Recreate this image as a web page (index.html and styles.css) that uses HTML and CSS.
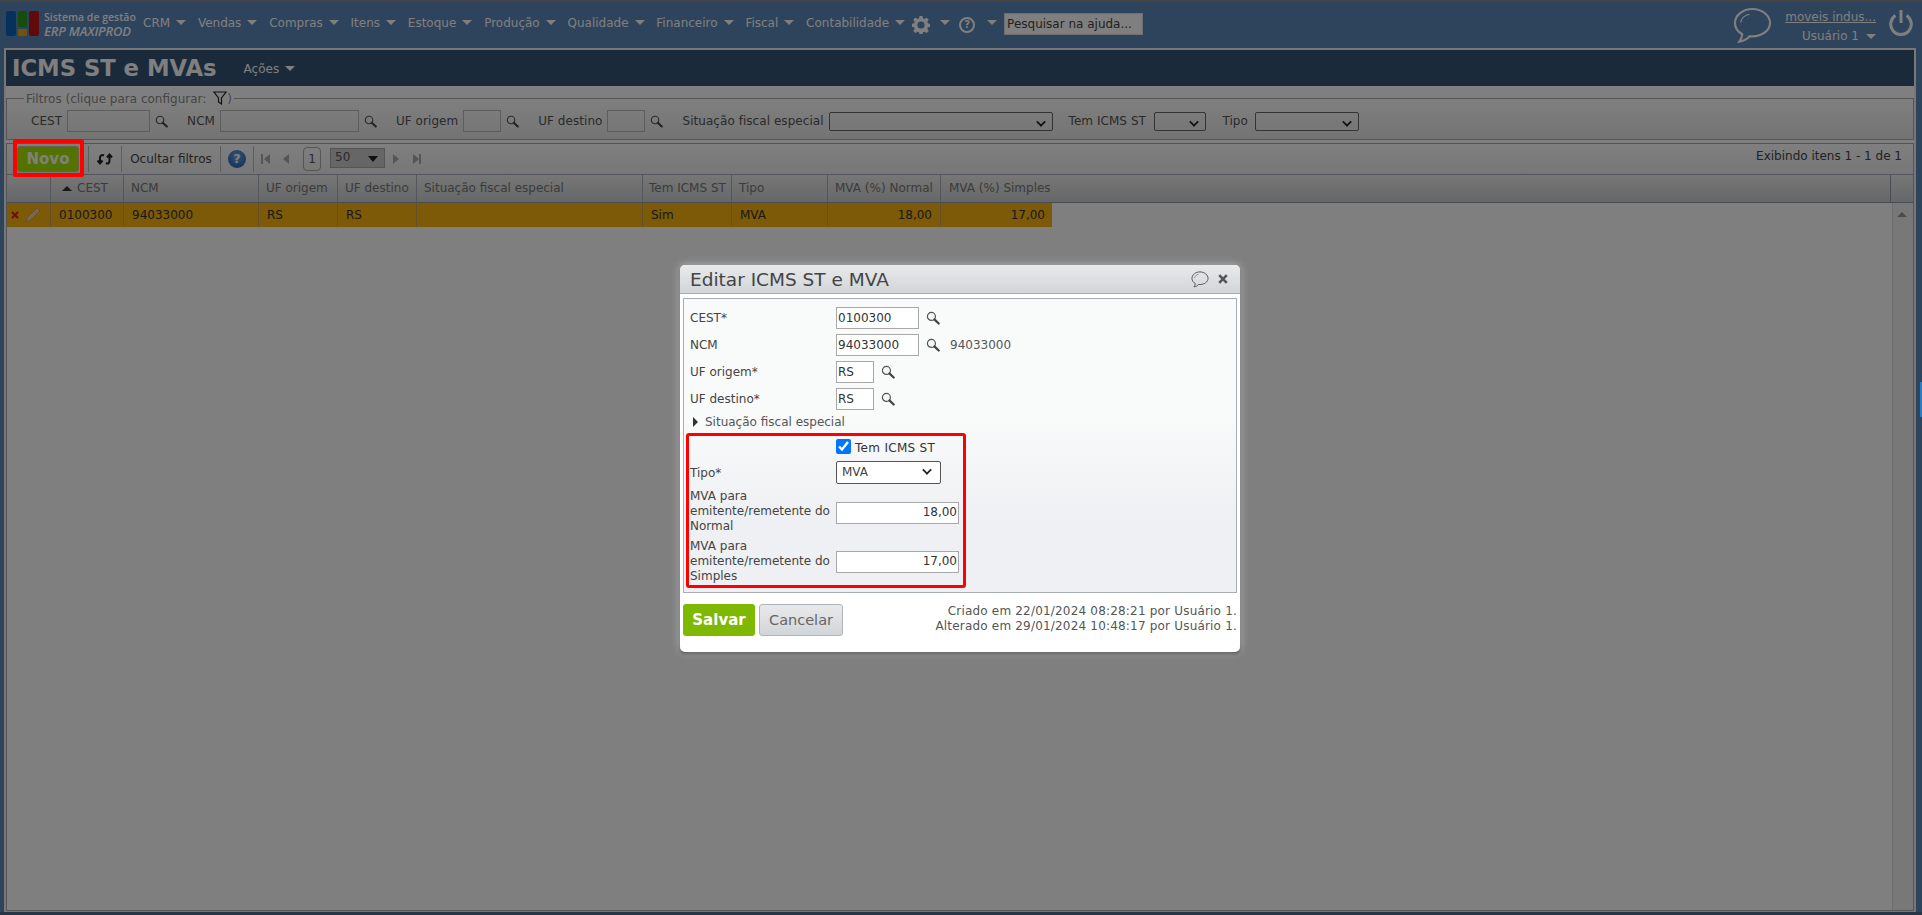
FILE: index.html
```html
<!DOCTYPE html>
<html lang="pt-BR">
<head>
<meta charset="utf-8">
<title>ICMS ST e MVAs</title>
<link rel="stylesheet" href="styles.css">
</head>
<body>
<svg class="defs" width="0" height="0" aria-hidden="true">
  <symbol id="lens" viewBox="0 0 15 15">
    <circle cx="5.8" cy="5.8" r="4.3" fill="#f4f6f8" stroke="#555" stroke-width="1.3"/>
    <path d="M9 9l4.6 4.4" stroke="#444" stroke-width="2.4" stroke-linecap="round"/>
  </symbol>
  <symbol id="bubble" viewBox="0 0 40 38">
    <path d="M20 2C10 2 2 8.500 2 16.500c0 5 3 9 7.500 11.500 0 3-1.500 5.500-3 7.500 4-.5 8-2.500 10.500-5.500 1 .1 2 .2 3 .2 10 0 18-6.200 18-13.700S30 2 20 2z" fill="none" stroke="currentColor" stroke-width="2.200"/>
    <path d="M8 16c0-4 4-8 9-8.500" fill="none" stroke="currentColor" stroke-width="1.200"/>
  </symbol>
</svg>
<div class="app">
  <header class="topbar">
    <div class="logo">
      <svg class="logo-mark" viewBox="0 0 33 25" aria-hidden="true">
        <rect x="0" y="0" width="10" height="25" rx="2" fill="#0a62b8"/>
        <rect x="12" y="0" width="9" height="16" rx="2" fill="#2f9a18"/>
        <rect x="12" y="18" width="9" height="7" rx="1" fill="#e2a41c"/>
        <rect x="23" y="0" width="10" height="25" rx="2" fill="#c0141c"/>
      </svg>
      <div class="logo-text">
        <span class="logo-small">Sistema de gestão</span>
        <span class="logo-big">ERP MAXIPROD</span>
      </div>
    </div>
    <nav class="menu">
      <span class="menu-item">CRM<i class="caret"></i></span>
      <span class="menu-item">Vendas<i class="caret"></i></span>
      <span class="menu-item">Compras<i class="caret"></i></span>
      <span class="menu-item">Itens<i class="caret"></i></span>
      <span class="menu-item">Estoque<i class="caret"></i></span>
      <span class="menu-item">Produção<i class="caret"></i></span>
      <span class="menu-item">Qualidade<i class="caret"></i></span>
      <span class="menu-item">Financeiro<i class="caret"></i></span>
      <span class="menu-item">Fiscal<i class="caret"></i></span>
      <span class="menu-item">Contabilidade<i class="caret"></i></span>
    </nav>
    <svg class="gear" viewBox="0 0 20 20" aria-hidden="true">
      <path fill="#fff" fill-rule="evenodd" d="M8.300 0h3.400l.5 2.700 1.700.7 2.300-1.600 2.400 2.400-1.600 2.300.7 1.700 2.700.5v3.400l-2.700.5-.7 1.700 1.600 2.300-2.400 2.400-2.300-1.600-1.700.7-.5 2.700H8.300l-.5-2.700-1.700-.7-2.300 1.600-2.400-2.400 1.600-2.300-.7-1.700L-.4 12V8.600l2.700-.5.7-1.700-1.600-2.300 2.400-2.400 2.300 1.600 1.700-.7zM10 6a4 4 0 100 8 4 4 0 000-8z"/>
    </svg>
    <i class="caret caret-gear"></i>
    <span class="help-round">?</span>
    <i class="caret caret-help"></i>
    <span class="help-search">Pesquisar na ajuda...</span>
    <svg class="chat" viewBox="0 0 40 38" aria-hidden="true"><use href="#bubble"/></svg>
    <div class="account">
      <a class="company">moveis indus...</a>
      <span class="user">Usuário 1<i class="caret"></i></span>
    </div>
    <svg class="power" viewBox="0 0 24 26" aria-hidden="true">
      <path d="M6.500 5.500a10.300 10.300 0 1011 0" fill="none" stroke="#fff" stroke-width="3"/>
      <path d="M12 0v13" stroke="#fff" stroke-width="3"/>
    </svg>
  </header>

  <main class="frame">
    <div class="titlebar">
      <h1 class="page-title">ICMS ST e MVAs</h1>
      <span class="actions">Ações<i class="caret"></i></span>
    </div>

    <fieldset class="filters">
      <legend class="filters-legend">Filtros (clique para configurar:
        <svg class="funnel" viewBox="0 0 14 14" aria-hidden="true"><path d="M1 1h12L8.500 7v6l-3-2V7z" fill="none" stroke="#222" stroke-width="1.200"/></svg>)
      </legend>
      <div class="filter-row">
        <label class="flabel">CEST</label><span class="finput f-cest"></span><svg class="lens"><use href="#lens"/></svg>
        <label class="flabel">NCM</label><span class="finput f-ncm"></span><svg class="lens"><use href="#lens"/></svg>
        <label class="flabel">UF origem</label><span class="finput f-uf"></span><svg class="lens"><use href="#lens"/></svg>
        <label class="flabel">UF destino</label><span class="finput f-uf"></span><svg class="lens"><use href="#lens"/></svg>
        <label class="flabel">Situação fiscal especial</label><span class="fselect s-sit"><i class="chev"></i></span>
        <label class="flabel flabel-next">Tem ICMS ST</label><span class="fselect s-tem"><i class="chev"></i></span>
        <label class="flabel flabel-next">Tipo</label><span class="fselect s-tipo"><i class="chev"></i></span>
      </div>
    </fieldset>

    <section class="grid-panel">
      <div class="toolbar">
        <button class="btn-new">Novo</button>
        <span class="tool tool-refresh">
          <svg class="refresh" viewBox="0 0 16 14" aria-hidden="true">
            <path d="M7 3.500C5 2.500 3 3.500 3 6v5M.5 8.500L3 11.500l2.500-3" fill="none" stroke="#222" stroke-width="2"/>
            <path d="M9 11c2 1 3.500 0 3.500-2.500V3M10 5.500L12.500 2.500 15 5.500" fill="none" stroke="#222" stroke-width="2"/>
          </svg>
        </span>
        <span class="tool tool-text">Ocultar filtros</span>
        <span class="tool tool-help"><span class="help-blue">?</span></span>
        <span class="pager">
          <i class="pg pg-first"></i>
          <i class="pg pg-prev"></i>
          <span class="page-num">1</span>
          <span class="page-size">50<i class="tri-down"></i></span>
          <i class="pg pg-next"></i>
          <i class="pg pg-last"></i>
        </span>
        <span class="showing">Exibindo itens 1 - 1 de 1</span>
      </div>

      <div class="thead">
        <span class="th"></span>
        <span class="th th-sorted"><i class="tri-up"></i>CEST</span>
        <span class="th">NCM</span>
        <span class="th">UF origem</span>
        <span class="th">UF destino</span>
        <span class="th">Situação fiscal especial</span>
        <span class="th th-tight">Tem ICMS ST</span>
        <span class="th">Tipo</span>
        <span class="th">MVA (%) Normal</span>
        <span class="th th-clip">MVA (%) Simples</span>
        <span class="th-fill"></span>
        <span class="th-scroll"></span>
      </div>

      <div class="tbody">
        <div class="rows">
          <div class="tr">
            <span class="td td-icons">
              <svg class="row-x" viewBox="0 0 8 8" aria-hidden="true"><path d="M1 1l6 6M7 1L1 7" stroke="#e0202a" stroke-width="2.200"/></svg>
              <svg class="row-pencil" viewBox="0 0 16 16" aria-hidden="true"><path d="M1 15l1.500-5L12 1l3 3-9.500 9z" fill="#f4d090" stroke="#c8985a" stroke-width=".8"/></svg>
            </span>
            <span class="td">0100300</span>
            <span class="td">94033000</span>
            <span class="td">RS</span>
            <span class="td">RS</span>
            <span class="td"></span>
            <span class="td">Sim</span>
            <span class="td">MVA</span>
            <span class="td td-num">18,00</span>
            <span class="td td-num">17,00</span>
          </div>
        </div>
        <div class="scrollbar"><i class="tri-up tri-scroll"></i></div>
      </div>
    </section>
  </main>
</div>

<div class="overlay"></div>

<div class="mark mark-novo"></div>
<i class="edge-accent"></i>

<div class="dialog">
  <div class="dialog-head">
    <h2 class="dialog-title">Editar ICMS ST e MVA</h2>
    <svg class="dialog-chat" viewBox="0 0 40 38" aria-hidden="true"><use href="#bubble"/></svg>
    <svg class="dialog-close" viewBox="0 0 10 10" aria-hidden="true"><path d="M1.200 1.200l7.600 7.600M8.800 1.200L1.200 8.800" stroke="#555" stroke-width="2.600"/></svg>
  </div>
  <div class="dialog-body">
    <div class="form-box">
      <div class="row row-a">
        <label class="lab">CEST*</label>
        <span class="inp inp-md">0100300</span>
        <svg class="lens lens-d"><use href="#lens"/></svg>
      </div>
      <div class="row row-b">
        <label class="lab">NCM</label>
        <span class="inp inp-md">94033000</span>
        <svg class="lens lens-d"><use href="#lens"/></svg>
        <span class="hint">94033000</span>
      </div>
      <div class="row row-b">
        <label class="lab">UF origem*</label>
        <span class="inp inp-sm">RS</span>
        <svg class="lens lens-d"><use href="#lens"/></svg>
      </div>
      <div class="row row-b">
        <label class="lab">UF destino*</label>
        <span class="inp inp-sm">RS</span>
        <svg class="lens lens-d"><use href="#lens"/></svg>
      </div>
      <div class="collapse"><i class="tri-right"></i>Situação fiscal especial</div>
      <div class="marked">
        <div class="row-check">
          <input class="check" type="checkbox" checked>
          <span class="check-label">Tem ICMS ST</span>
        </div>
        <div class="row row-tipo">
          <label class="lab">Tipo*</label>
          <span class="sel">MVA<i class="chev"></i></span>
        </div>
        <div class="row row-mva">
          <label class="lab lab-multi">MVA para emitente/remetente do Normal</label>
          <span class="inp inp-lg">18,00</span>
        </div>
        <div class="row row-mva row-mva2">
          <label class="lab lab-multi">MVA para emitente/remetente do Simples</label>
          <span class="inp inp-lg">17,00</span>
        </div>
      </div>
    </div>
    <div class="dialog-foot">
      <button class="btn-save">Salvar</button>
      <button class="btn-cancel">Cancelar</button>
      <div class="audit">
        <div>Criado em 22/01/2024 08:28:21 por Usuário 1.</div>
        <div>Alterado em 29/01/2024 10:48:17 por Usuário 1.</div>
      </div>
    </div>
  </div>
</div>
</body>
</html>
```
FILE: styles.css
```css
* { box-sizing: border-box; }
html, body { margin: 0; padding: 0; height: 915px; overflow: hidden; }
body { font-family: "DejaVu Sans", Verdana, sans-serif; font-size: 12px; color: #444; background: #5c86b8; position: relative; }
.defs { position: absolute; }
i { display: block; font-style: normal; }

.app { height: 915px; display: flex; flex-direction: column; border-top: 2px solid #888; border-bottom: 3px solid #4e6a8c; padding-right: 6px; background: #5c86b8; }

/* top bar */
.topbar { height: 46px; flex: none; display: flex; align-items: flex-start; color: #fff; position: relative; }
.logo { display: flex; margin: 9px 0 0 6px; width: 137px; flex: none; }
.logo-mark { width: 33px; height: 25px; flex: none; }
.logo-text { margin-left: 5px; display: flex; flex-direction: column; color: #fff; font-family: "Open Sans", sans-serif; font-weight: 600; white-space: nowrap; }
.logo-small { font-size: 10.500px; line-height: 13px; }
.logo-big { font-size: 13px; font-style: italic; line-height: 14px; letter-spacing: -.2px; }
.menu { display: flex; margin-top: 14px; gap: 11.800px; flex: none; }
.menu-item { display: flex; align-items: flex-start; white-space: nowrap; line-height: 15px; }
.caret { width: 0; height: 0; border-left: 5px solid transparent; border-right: 5px solid transparent; border-top: 5px solid #fff; margin: 4px 0 0 6px; flex: none; }
.gear { width: 18px; height: 18px; margin: 14px 0 0 7px; flex: none; }
.caret-gear { margin: 18px 0 0 10px; }
.help-round { width: 16px; height: 16px; margin: 15px 0 0 9px; border: 2px solid #fff; border-radius: 50%; font-size: 10px; line-height: 12px; text-align: center; font-weight: 700; flex: none; }
.caret-help { margin: 18px 0 0 12px; }
.help-search { width: 139px; height: 22px; margin: 11px 0 0 7px; background: #fff; border: 1px solid #ddd; color: #444; line-height: 20px; padding-left: 2px; white-space: nowrap; flex: none; }
.chat { width: 39px; height: 37px; margin: 5px 0 0 auto; color: #fff; flex: none; }
.account { width: 93px; margin: 7px 0 0 11px; display: flex; flex-direction: column; align-items: flex-end; line-height: 17px; flex: none; }
.company { text-decoration: underline; white-space: nowrap; color: #fff; }
.user { display: flex; margin-top: 2px; white-space: nowrap; }
.user .caret { margin: 6px 0 0 7px; }
.power { width: 24px; height: 26px; margin: 8px 3px 0 13px; flex: none; }

/* page frame */
.frame { flex: 1; margin-left: 4px; background: #fff; border: 2px solid #eee; border-bottom-width: 1px; display: flex; flex-direction: column; min-height: 0; }
.titlebar { height: 36px; flex: none; background: #345476; display: flex; color: #fff; }
.page-title { margin: 0 0 0 6px; font-size: 22.700px; line-height: 36px; font-weight: 700; color: #fff; white-space: nowrap; }
.actions { display: flex; margin: 12px 0 0 27px; line-height: 15px; }
.actions .caret { margin: 4px 0 0 6px; }

.filters { margin: 5px 0 0; padding: 0; border: 1px solid #aaa; height: 49px; min-width: 0; flex: none; background: linear-gradient(#fff, #e8e8e8); }
.filters-legend { margin-left: 17px; padding: 0 2px; color: #8a8a8a; line-height: 14px; white-space: nowrap; }
.funnel { width: 14px; height: 14px; vertical-align: -2px; margin-left: 3px; }
.filter-row { display: flex; align-items: center; height: 24px; margin-top: 3px; padding-left: 24px; color: #666; }
.flabel { white-space: nowrap; color: #555; margin-right: 5px; letter-spacing: .05px; }
.flabel-next { margin-left: 16px; }
.finput { height: 22px; background: transparent; border: 1px solid #bbb; flex: none; }
.f-cest { width: 83px; }
.f-ncm { width: 139px; }
.f-uf { width: 38px; }
.lens { width: 13px; height: 13px; flex: none; margin: 0 19px 0 5px; }
.fselect { height: 19px; border: 1px solid #666; border-radius: 2px; position: relative; flex: none; }
.s-sit { width: 224px; }
.s-tem { width: 52px; margin-left: 3.500px; }
.s-tipo { width: 104px; margin-left: 2.500px; }
.chev { position: absolute; right: 7px; top: 5px; width: 8px; height: 8px; border-right: 2px solid #222; border-bottom: 2px solid #222; transform: rotate(45deg) scale(.85); }

.grid-panel { flex: 1; margin: 3px 0 0; border: 1px solid #aaa; display: flex; flex-direction: column; min-height: 0; }
.toolbar { height: 30px; flex: none; display: flex; align-items: center; position: relative; background: linear-gradient(#fff, #eee); }
.btn-new { width: 62px; height: 26px; margin-left: 10px; border: 1px solid #c0cc9c; border-radius: 3px; background: #a8e400; color: #fff; font: 700 15px "DejaVu Sans", sans-serif; padding: 0; flex: none; }
.tool { height: 26px; display: flex; align-items: center; flex: none; border-right: 1px solid #bbb; }
.tool-refresh { margin-left: 9px; width: 34px; border-left: 1px solid #bbb; justify-content: center; }
.refresh { width: 16px; height: 14px; }
.tool-text { width: 99px; justify-content: center; color: #444; white-space: nowrap; }
.tool-help { width: 33px; justify-content: center; }
.help-blue { width: 18px; height: 18px; border-radius: 50%; background: radial-gradient(circle at 50% 35%, #6aa8ea, #1456a8); color: #fff; font-weight: 700; font-size: 13px; line-height: 18px; text-align: center; }
.pager { display: flex; align-items: center; margin-left: 7px; flex: none; }
.pg { width: 0; height: 0; border-top: 5px solid transparent; border-bottom: 5px solid transparent; position: relative; }
.pg-first, .pg-prev { border-right: 6px solid #aaa; }
.pg-next, .pg-last { border-left: 6px solid #aaa; }
.pg-first { margin-left: 3px; }
.pg-first::before { content: ""; position: absolute; left: -3px; top: -5px; width: 2px; height: 10px; background: #aaa; }
.pg-prev { margin-left: 13px; }
.pg-last::after { content: ""; position: absolute; left: 0; top: -5px; width: 2px; height: 10px; background: #aaa; }
.page-num { width: 18px; height: 24px; margin-left: 14px; border: 1px solid #aaa; border-radius: 4px; text-align: center; line-height: 22px; color: #555; }
.page-size { width: 55px; height: 20px; margin: -3px 0 0 9px; background: #ccc; border: 1px solid #aaa; line-height: 17px; padding-left: 4px; position: relative; color: #555; }
.tri-down { position: absolute; right: 6px; top: 7px; width: 0; height: 0; border-left: 5px solid transparent; border-right: 5px solid transparent; border-top: 6px solid #222; }
.pg-next { margin-left: 8px; }
.pg-last { margin-left: 14px; }
.showing { position: absolute; right: 11px; top: 5px; line-height: 15px; color: #444; white-space: nowrap; }

.thead { height: 29px; flex: none; display: grid; grid-template-columns: 44px 73px 135px 79px 79px 226px 89px 96px 113px 112px 1fr 23px; background: linear-gradient(#eee, #ccced0); border-top: 1px solid #aab; border-bottom: 1px solid #99a; }
.th { border-right: 1px solid #aab; line-height: 25px; padding-left: 7px; color: #777; white-space: nowrap; overflow: hidden; display: flex; align-items: center; }
.th-sorted { padding-left: 11px; }
.th-sorted .tri-up { margin-right: 5px; }
.th-tight { padding-left: 6px; }
.th-clip { border-right: 0; padding-left: 8px; overflow: visible; }
.th-fill { border: 0; }
.th-scroll { border-left: 1px solid #99a; }
.tri-up { width: 0; height: 0; border-left: 5px solid transparent; border-right: 5px solid transparent; border-bottom: 5px solid #333; flex: none; }

.tbody { flex: 1; display: flex; min-height: 0; background: #fff; }
.rows { flex: 1; }
.tr { width: 1045px; height: 24px; display: grid; grid-template-columns: 44px 73px 135px 79px 79px 226px 89px 96px 113px 112px; background: #f8b410; }
.td { border-right: 1px solid #c8a050; padding-left: 8px; line-height: 24px; color: #333; white-space: nowrap; }
.td:last-child { border-right: 0; }
.td-num { text-align: right; padding: 0 8px 0 0; }
.td-icons { display: flex; align-items: center; padding-left: 4px; }
.row-x { width: 8px; height: 8px; flex: none; }
.row-pencil { width: 16px; height: 16px; margin-left: 6px; flex: none; }
.scrollbar { width: 21px; background: #f0f0f0; border-left: 1px solid #ddd; flex: none; padding: 9px 0 0 4px; }
.tri-scroll { border-bottom-color: #999; }

/* overlay */
.overlay { position: absolute; inset: 0; background: rgba(0,0,0,.5); }
.mark-novo { position: absolute; left: 13px; top: 139px; width: 71px; height: 38px; border: 4px solid #f00; border-radius: 2px; }
.edge-accent { position: absolute; left: 1920px; top: 382px; width: 2px; height: 35px; background: #2a7cc4; }

/* dialog */
.dialog { position: absolute; left: 680px; top: 265px; width: 560px; height: 387px; background: #fff; border-radius: 5px; box-shadow: 0 0 8px rgba(255,255,255,.45), 0 2px 3px #444; display: flex; flex-direction: column; }
.dialog-head { height: 29px; flex: none; display: flex; align-items: center; padding: 2px 0 0 10px; background: linear-gradient(#e8e9eb, #d2d6d9); border-bottom: 1px solid #a8acb4; border-radius: 5px 5px 0 0; }
.dialog-title { margin: 0; font-size: 18.500px; font-weight: 400; color: #444; flex: 1; white-space: nowrap; line-height: 26px; }
.dialog-chat { width: 18px; height: 17px; margin-top: -2px; color: #555; flex: none; }
.dialog-close { width: 10px; height: 10px; margin: -2px 12px 0 9px; flex: none; }
.dialog-body { flex: 1; padding: 4px 3px 0 3px; }
.form-box { height: 295px; border: 1px solid #a8acb4; background: linear-gradient(#f9fafa 40%, #eff0f3 75%); padding: 8px 0 0 6px; position: relative; color: #444; }
.row { display: flex; align-items: center; }
.row-b { margin-top: 5px; }
.lab { width: 146px; flex: none; }
.inp { height: 22px; background: #fff; border: 1px solid #a8a8a8; line-height: 20px; padding-left: 1px; flex: none; color: #333; }
.inp-md { width: 83px; }
.inp-sm { width: 38px; }
.inp-lg { width: 123px; text-align: right; padding: 0 1px 0 0; line-height: 19px; }
.lens-d { width: 14px; height: 14px; margin: 0 0 0 7px; }
.hint { margin-left: 10px; color: #555; }
.collapse { display: flex; align-items: center; margin: 3px 0 0 3px; height: 17px; color: #555; }
.tri-right { width: 0; height: 0; border-top: 5px solid transparent; border-bottom: 5px solid transparent; border-left: 5px solid #333; margin-right: 7px; }

.marked { margin: 3px 0 0 -4px; width: 280px; height: 155px; border: 3px solid #f00; border-radius: 3px; padding: 3px 0 0 1px; position: relative; }
.row-check { display: flex; align-items: center; height: 15px; padding-left: 146px; color: #333; }
.check { width: 15px; height: 15px; margin: 0 4px 0 0; accent-color: #0075ff; flex: none; }
.check-label { letter-spacing: .3px; padding-top: 2px; }
.row-tipo { margin-top: 7px; height: 23px; }
.sel { width: 105px; height: 23px; background: #fff; border: 1px solid #555; border-radius: 2px; padding-left: 5px; line-height: 21px; position: relative; color: #444; }
.sel .chev { right: 9px; top: 4px; }
.row-mva { margin-top: 5px; height: 45px; }
.row-mva2 { margin-top: 5px; }
.row-mva .inp { position: relative; top: 1px; }
.row-mva2 .inp { top: 0; }
.lab-multi { line-height: 15px; }
.dialog-foot { display: flex; margin-top: 11px; align-items: flex-start; }
.btn-save { width: 72px; height: 32px; background: #7fb800; color: #fff; border: 0; border-radius: 3px; font: 700 15px "DejaVu Sans", sans-serif; padding: 0; flex: none; }
.btn-cancel { width: 84px; height: 32px; margin-left: 4px; background: linear-gradient(#e8e9eb, #d2d5d8); color: #666; border: 1px solid #b0b4b8; border-radius: 3px; font: 400 14.500px "DejaVu Sans", sans-serif; padding: 0; flex: none; }
.audit { margin: 0 0 0 auto; text-align: right; line-height: 15px; color: #555; letter-spacing: .19px; }
```
